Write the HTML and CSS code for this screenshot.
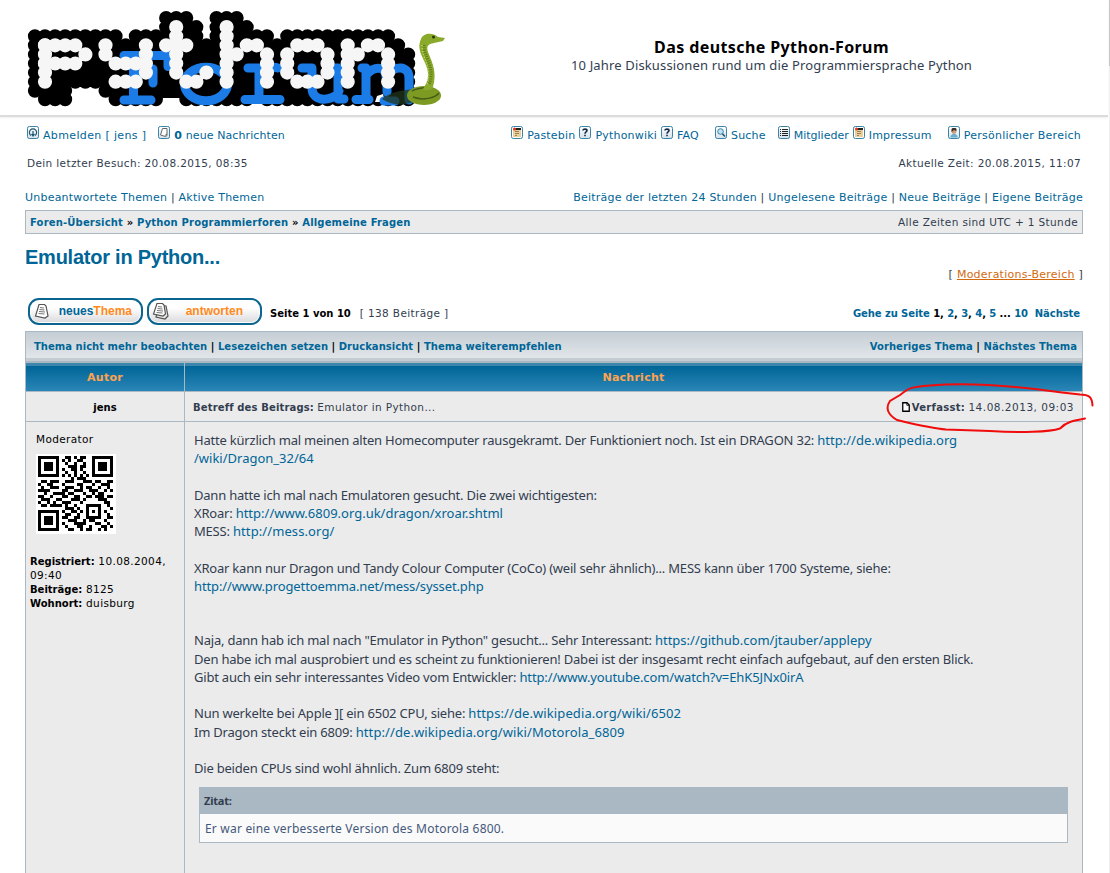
FILE: index.html
```
<!DOCTYPE html>
<html lang="de">
<head>
<meta charset="utf-8">
<title>Das deutsche Python-Forum</title>
<link rel="stylesheet" href="styles.css">
</head>
<body>
<svg class="defs" width="0" height="0">
  <defs>
    <linearGradient id="tile" x1="0" y1="0" x2="0" y2="1"><stop offset="0" stop-color="#fff"/><stop offset="1" stop-color="#d5e2ea"/></linearGradient>
    <symbol id="i-note" viewBox="0 0 12 13"><rect x=".5" y=".5" width="11" height="12" rx="1.8" fill="#fff" stroke="#3a83a7"/><path d="M2 2h8v9H2z" fill="#e8cf9b"/><path d="M4 5.500h4M4 7.500h4M4 9.500h2" stroke="#9b8055"/><path d="M4 2h6v2H4z" fill="#222"/><circle cx="3.500" cy="3" r="1.500" fill="#e33b1c"/></symbol>
    <symbol id="i-help" viewBox="0 0 12 13"><rect x=".5" y=".5" width="11" height="12" rx="1.800" fill="url(#tile)" stroke="#3a83a7"/><path d="M4 4.500C4 2.600 8 2.600 8 4.600C8 6 6 6 6 7.800M6 8.800v1.500" fill="none" stroke="#16294a" stroke-width="1.600"/></symbol>
  </defs>
</svg>
<div class="edge"></div>
<header class="header">
  <svg class="logo" width="430" height="110" viewBox="20 5 430 110">
    <g fill="none" stroke="#000" stroke-width="14" stroke-linecap="round" stroke-dasharray="0 10.090">
      <path d="M166.100 18h20.300M216.500 18h20.300M166.100 27.100h30.400M216.500 27.100h30.400"/>
      <path d="M34.900 36.200h80.900M135.800 36.200h60.700M216.500 36.200h50.600M287.200 36.200h101"/>
      <path d="M34.900 45.300h363.500M34.900 54.400h373.600M34.900 63.500h373.600M34.900 72.600h373.600M34.900 81.700h373.600"/>
      <path d="M34.900 90.800h30.400M105.500 90.800h302.800"/>
      <path d="M45 99.300h20.300M115.600 99.300h40.500M186.300 99.300h60.600M267 99.300h20.300M297.300 99.300h111"/>
    </g>
    <path d="M40 45h360v42H40zM110 86h292v12H110z" fill="#000"/>
    <path d="M256 94l4 4v6h-4zM375 102l2-6 6-2 2 8z" fill="#fff"/>
    <g fill="none" stroke="#1b7ce8" stroke-width="9" stroke-linecap="round" stroke-linejoin="round">
      <path d="M124 55.500h44v11M133.500 56v44M124 100h27M134 73h19M153 69v14"/>
      <ellipse cx="206" cy="84" rx="21.500" ry="16.800"/>
      <path d="M248 68h11v31M245 99.500h35M260 75c5-7 12-9 18-7M302 68h10v20c0 15 22 14 27 3M329 68h9v31h6M362 68h4v31M356 99.500h13M367 74c9-9 19-7 19 3M387 76c7-11 22-11 22 2v22M387 74v18M384 101h11"/>
    </g>
    <g fill="none" stroke="#f6f6f6" stroke-width="14.200" stroke-linecap="round">
      <path stroke-dasharray="0 10.090" d="M45 45.300h30.400M45 63.500h30.400M85.400 54.400h.1M115.600 63.500h20.300M115.600 81.700h20.300M166.100 45.300h20.300M186.300 81.700h10.200M206.400 72.600h.1M236.700 54.400h.1M246.800 45.300h10.200M297.300 45.300h20.300M297.300 81.700h20.300M357.800 54.400h.1M367.900 45.300h10.200"/>
      <path stroke-dasharray="0 9.090" d="M45 45.300v36.500M105.500 45.300v9.200M145.900 45.300v27.400M176.200 27.100v45.600M226.600 27.100v54.700M267 54.400v27.400M287.200 54.400v18.300M327.500 54.400v18.300M347.700 45.300v36.500M388.100 54.400v27.400"/>
    </g>
    <path d="M382 99c8-7 20-9 33-10v12c-10 5-22 5-33-2z" fill="#22351c" opacity=".75"/>
    <ellipse cx="424" cy="95.500" rx="17" ry="9.500" fill="#7d9b22"/>
    <path d="M413 97c10 4 22 1 26-4M412 91c7-4 14-3 20-4" stroke="#465d17" stroke-width="1.500" fill="none"/>
    <path d="M433 87c-2 4-8 4-10 2c6-9 6-14 4-21c-3-10-11-18-6-29c3-7 12-6 17-2l7 1-2 3-9 2c-6 1-8 3-6 9c5 12 9 21 5 35z" fill="#89aa2b"/>
    <path d="M424 45c0 13 12 22 5 40" stroke="#5b771c" stroke-width="3" stroke-dasharray="1 1.300" fill="none"/>
    <path d="M422 45c0 14 10 22 5 40" stroke="#c3d45a" stroke-width="1.500" stroke-dasharray="1 2" fill="none"/>
    <circle cx="433.500" cy="37" r="1.500" fill="#28360d"/>
  </svg>
  <div class="site">
    <div class="site-name"><span>Das deutsche Python-Forum</span></div>
    <div class="site-desc"><span>10 Jahre Diskussionen rund um die Programmiersprache Python</span></div>
  </div>
</header>
<main class="page">
  <nav class="menu">
    <div class="group">
      <svg class="ic" viewBox="0 0 12 13"><rect x=".5" y=".5" width="11" height="12" rx="1.800" fill="url(#tile)" stroke="#3a83a7"/><path d="M4 9.500a3.600 3.600 0 1 1 4 0M6 5v5M4.500 8L6 10l1.500-2" fill="none" stroke="#1c5570" stroke-width="1.200"/></svg><a class="m1">Abmelden [ jens ]</a>
      <svg class="ic gap-a" viewBox="0 0 12 13"><rect x=".5" y=".5" width="11" height="12" rx="1.800" fill="url(#tile)" stroke="#3a83a7"/><path d="M4.500 2.500H9V9.500L7.500 10.500L2.500 9L4.500 2.500M7 9.500L9 8" fill="#fff" stroke="#666"/></svg><a class="m2"><b>0</b> neue Nachrichten</a>
    </div>
    <div class="group right">
      <svg class="ic"><use href="#i-note"/></svg><a class="m3">Pastebin</a>
      <svg class="ic"><use href="#i-help"/></svg><a class="m4">Pythonwiki</a>
      <svg class="ic"><use href="#i-help"/></svg><a class="m5">FAQ</a>
      <svg class="ic" viewBox="0 0 12 13"><rect x=".5" y=".5" width="11" height="12" rx="1.800" fill="url(#tile)" stroke="#3a83a7"/><circle cx="5.500" cy="5.500" r="2.800" fill="#bfe2f4" stroke="#3a83a7"/><path d="M7.500 7.800L10 10.500" stroke="#265d7a" stroke-width="1.700"/></svg><a class="m6">Suche</a>
      <svg class="ic" viewBox="0 0 12 13"><rect x=".5" y=".5" width="11" height="12" rx="1.800" fill="url(#tile)" stroke="#3a83a7"/><path d="M2 3.500h1M4 3.500h6M2 5.500h1M4 5.500h6M2 7.500h1M4 7.500h6M2 9.500h1M4 9.500h6" stroke="#222"/></svg><a class="m7">Mitglieder</a>
      <svg class="ic"><use href="#i-note"/></svg><a class="m8">Impressum</a>
      <svg class="ic" viewBox="0 0 12 13"><rect x=".5" y=".5" width="11" height="12" rx="1.800" fill="url(#tile)" stroke="#3a83a7"/><path d="M2.500 11.500V10l2-2h3l2 2v1.500z" fill="#69afd0"/><circle cx="6" cy="5.500" r="2.400" fill="#d29a76"/><path d="M3.500 6V3l1-1h3l1 1v2L6 4z" fill="#3c2c25"/></svg><a class="m9">Persönlicher Bereich</a>
    </div>
  </nav>
  <div class="row visits small"><span>Dein letzter Besuch: 20.08.2015, 08:35</span><span>Aktuelle Zeit: 20.08.2015, 11:07</span></div>
  <div class="row filters"><span><a>Unbeantwortete Themen</a> | <a>Aktive Themen</a></span><span><a>Beiträge der letzten 24 Stunden</a> | <a>Ungelesene Beiträge</a> | <a>Neue Beiträge</a> | <a>Eigene Beiträge</a></span></div>
  <div class="row crumbs"><b><a>Foren-Übersicht</a> » <a>Python Programmierforen</a> » <a>Allgemeine Fragen</a></b><span class="small zone">Alle Zeiten sind UTC + 1 Stunde</span></div>
  <h1 class="title"><span>Emulator in Python...</span></h1>
  <div class="mod">[ <a>Moderations-Bereich</a> ]</div>
  <div class="actions">
    <a class="btn"><svg width="16" height="17" viewBox="0 0 16 17"><path d="M5 1.500L10.500 1.500L12 3L14 13l-3 2L1.500 13z" fill="#fff" stroke="#555" stroke-width="1.200"/><path d="M6 4.500l4 .5M5.500 6.500l5 .5M5 8.500l6 .5M4.500 10.500l6 .5" stroke="#777"/></svg><span><em>neues</em>Thema</span></a>
    <a class="btn reply"><svg width="18" height="19" viewBox="0 0 18 19"><path d="M7 3l7 1 2 10-3 3-9-2z" fill="#e5e5e0" stroke="#555" stroke-width="1.200"/><path d="M5 1.500L10.500 1.500L12 3L13.500 12l-2.500 2L1.500 12z" fill="#fff" stroke="#555" stroke-width="1.200"/><path d="M6 4.500l4 .5M5.500 6.500l5 .5M5 8.500l6 .5M4.500 10.500l6 .5" stroke="#777"/></svg><span>antworten</span></a>
    <b class="seite">Seite 1 von 10</b><span class="count small">[ 138 Beiträge ]</span>
    <b class="goto"><a>Gehe zu Seite</a> 1, <a>2</a>, <a>3</a>, <a>4</a>, <a>5</a> ... <a>10</a>&nbsp; <a>Nächste</a></b>
  </div>
  <section class="topic">
    <div class="toolbar"><b><a>Thema nicht mehr beobachten</a> | <a>Lesezeichen setzen</a> | <a>Druckansicht</a> | <a>Thema weiterempfehlen</a></b><b><a>Vorheriges Thema</a> | <a>Nächstes Thema</a></b></div>
    <div class="head"><b>Autor</b><b><span>Nachricht</span></b></div>
    <div class="meta"><b class="author">jens</b>
      <div class="subject"><span><b>Betreff des Beitrags:</b> <span class="small">Emulator in Python...</span></span><span class="date"><svg width="8" height="10" viewBox="0 0 8 10"><path d="M.75.750H5L7.250 3V9.250H.75z" fill="#fff" stroke="#000" stroke-width="1.300"/><path d="M4.800 1v2.300H7" fill="none" stroke="#000" stroke-width=".8"/></svg><b>Verfasst:</b> <span class="small">14.08.2013, 09:03</span></span></div>
    </div>
    <div class="post">
      <aside class="profile small">
        <div class="rank">Moderator</div>
        <svg class="avatar" width="80" height="80" viewBox="-.667 -.667 26.667 26.667" shape-rendering="crispEdges"><path d="M-1-1h28v28H-1z" fill="#fff"/>
          <path fill="none" stroke="#000" d="M0 .5h7M9 .5h2M12 .5h1M14 .5h2M18 .5h7M0 1.500h1M6 1.500h1M8 1.500h1M10 1.500h1M13 1.500h2M18 1.500h1M24 1.500h1M0 2.500h1M2 2.500h3M6 2.500h1M9 2.500h1M12 2.500h1M15 2.500h1M18 2.500h1M20 2.500h3M24 2.500h1M0 3.500h1M2 3.500h3M6 3.500h1M10 3.500h3M14 3.500h2M18 3.500h1M20 3.500h3M24 3.500h1M0 4.500h1M2 4.500h3M6 4.500h1M8 4.500h1M11 4.500h2M14 4.500h1M18 4.500h1M20 4.500h3M24 4.500h1M0 5.500h1M6 5.500h1M9 5.500h1M12 5.500h1M15 5.500h1M18 5.500h1M24 5.500h1M0 6.500h7M8 6.500h1M10 6.500h1M12 6.500h1M14 6.500h1M16 6.500h1M18 6.500h7M11 7.500h1M13 7.500h3M1 8.500h2M4 8.500h3M9 8.500h3M15 8.500h3M19 8.500h2M23 8.500h2M0 9.500h1M3 9.500h2M8 9.500h1M13 9.500h2M18 9.500h1M21 9.500h3M1 10.500h1M4 10.500h3M9 10.500h3M14 10.500h1M16 10.500h2M20 10.500h1M23 10.500h1M0 11.500h4M8 11.500h2M12 11.500h3M17 11.500h3M22 11.500h1M24 11.500h1M2 12.500h1M5 12.500h4M10 12.500h2M15 12.500h1M18 12.500h1M20 12.500h2M0 13.500h2M4 13.500h1M8 13.500h2M12 13.500h2M16 13.500h2M19 13.500h3M23 13.500h2M1 14.500h3M6 14.500h2M11 14.500h3M15 14.500h1M20 14.500h3M0 15.500h1M3 15.500h1M5 15.500h1M8 15.500h3M14 15.500h1M22 15.500h2M1 16.500h2M4 16.500h4M9 16.500h1M12 16.500h1M16 16.500h5M23 16.500h1M9 17.500h3M13 17.500h1M16 17.500h1M20 17.500h1M24 17.500h1M0 18.500h7M8 18.500h1M11 18.500h2M14 18.500h1M16 18.500h1M18 18.500h1M20 18.500h1M22 18.500h1M0 19.500h1M6 19.500h1M9 19.500h2M13 19.500h1M16 19.500h1M20 19.500h1M23 19.500h1M0 20.500h1M2 20.500h3M6 20.500h1M8 20.500h2M12 20.500h2M16 20.500h5M23 20.500h2M0 21.500h1M2 21.500h3M6 21.500h1M10 21.500h3M15 21.500h1M17 21.500h2M22 21.500h1M0 22.500h1M2 22.500h3M6 22.500h1M8 22.500h1M12 22.500h4M19 22.500h2M23 22.500h1M0 23.500h1M6 23.500h1M9 23.500h1M13 23.500h2M17 23.500h1M21 23.500h2M24 23.500h1M0 24.500h7M10 24.500h2M14 24.500h1M16 24.500h2M20 24.500h1M22 24.500h1"/></svg>
        <div class="facts"><b>Registriert:</b> 10.08.2004,<br>09:40<br><b>Beiträge:</b> 8125<br><b>Wohnort:</b> duisburg</div>
      </aside>
      <article class="body">
        <p>Hatte kürzlich mal meinen alten Homecomputer rausgekramt. Der Funktioniert noch. Ist ein DRAGON 32: <a>http://de.wikipedia.org</a></p>
        <p><a>/wiki/Dragon_32/64</a></p><p></p>
        <p>Dann hatte ich mal nach Emulatoren gesucht. Die zwei wichtigesten:</p>
        <p>XRoar: <a>http://www.6809.org.uk/dragon/xroar.shtml</a></p>
        <p>MESS: <a class="wide">http://mess.org/</a></p><p></p>
        <p>XRoar kann nur Dragon und Tandy Colour Computer (CoCo) (weil sehr ähnlich)... MESS kann über 1700 Systeme, siehe:</p>
        <p><a class="tight">http://www.progettoemma.net/mess/sysset.php</a></p><p></p><p></p>
        <p>Naja, dann hab ich mal nach "Emulator in Python" gesucht... Sehr Interessant: <a>https://github.com/jtauber/applepy</a></p>
        <p>Den habe ich mal ausprobiert und es scheint zu funktionieren! Dabei ist der insgesamt recht einfach aufgebaut, auf den ersten Blick.</p>
        <p>Gibt auch ein sehr interessantes Video vom Entwickler: <a class="tight">http://www.youtube.com/watch?v=EhK5JNx0irA</a></p><p></p>
        <p>Nun werkelte bei Apple ][ ein 6502 CPU, siehe: <a class="wide">https://de.wikipedia.org/wiki/6502</a></p>
        <p>Im Dragon steckt ein 6809: <a class="wide">http://de.wikipedia.org/wiki/Motorola_6809</a></p><p></p>
        <p>Die beiden CPUs sind wohl ähnlich. Zum 6809 steht:</p>
        <div class="quote"><b>Zitat:</b><div>Er war eine verbesserte Version des Motorola 6800.</div></div>
      </article>
    </div>
  </section>
</main>
<svg class="marker" width="210" height="56" viewBox="885 380 210 56"><path d="M1092.500 405.500C1092 397 1089 394.500 1080 394.500L1062 392.500L1035 389C1000 385 960 383 930 385.500C910 387 909 388 900 395L890 401C885 408 888 415 897 420C910 423 930 428 946 429.500L990 431C1020 433 1050 432 1060 428.500C1066 422 1074 420.500 1085 418.500" fill="none" stroke="#f00c0c" stroke-width="2" stroke-linecap="round"/></svg>
</body>
</html>
```
FILE: styles.css
```
* { box-sizing: border-box; }
html, body { height: 873px; overflow: hidden; }
body { margin: 0; background: #fff; color: #323d4f; font: 11px/14px "DejaVu Sans", Verdana, sans-serif; white-space: nowrap; position: relative; }
a { color: #006597; }
b { font-weight: bold; }
.small { font-size: 10.5px; letter-spacing: .37px; }
.small b { font-size: 10px; letter-spacing: 0; line-height: 1; }
.defs { position: absolute; }
.edge { position: absolute; right: 0; top: 0; width: 1px; height: 873px; background: linear-gradient(#c9c9c9 66px, #f0f0f0 66px); }
.header { height: 117px; width: 1108px; display: flex; padding: 5px 0 0 20px; border-bottom: 2px solid #dcdcdc; box-shadow: 0 1px 2px #eee; }
.logo { flex: none; }
.site { width: 643px; text-align: center; padding-top: 32px; }
.site-name { font: bold 16px/20px "Noto Sans", sans-serif; color: #000; letter-spacing: .4px; }
.site-desc { font: 13px/17px "Noto Sans", sans-serif; letter-spacing: .15px; }
.page { margin: 0 27px 0 25px; }
.menu { display: flex; justify-content: space-between; height: 36px; padding: 9px 2px 0 2px; letter-spacing: .2px; }
.group { display: flex; align-items: flex-start; }
.ic { width: 12px; height: 13px; margin-right: 4px; flex: none; }
.menu a { padding-top: 3px; margin-right: 4px; }
.gap-a { margin-left: 8px; }
.menu .m1 { letter-spacing: .35px; }
.menu .m2 { letter-spacing: .1px; }
.menu .m5, .menu .m8 { margin-right: 16px; }
.menu .m6 { margin-right: 12px; }
.menu .m7 { letter-spacing: 0; }
.menu .m9 { margin-right: 0; letter-spacing: .25px; }
.row { display: flex; justify-content: space-between; }
.visits { padding: 3px 2px 0; height: 37px; }
.filters { height: 20px; padding-top: 1px; letter-spacing: .22px; }
.crumbs { border: 1px solid #a9b8c2; background: #ebebeb; height: 24px; padding: 5px 4px; font-size: 10px; }
.crumbs b { color: #000; letter-spacing: .17px; }
.zone { line-height: 12px; }
.title { margin: 0; height: 33px; padding-top: 11px; font: bold 20px/24px "Liberation Sans", Arial, sans-serif; color: #006597; letter-spacing: -.24px; }
.mod { text-align: right; height: 31px; padding-top: 1px; letter-spacing: .25px; }
.mod a { color: #d36a10; text-decoration: underline; }
.actions { display: flex; height: 33px; padding-left: 3px; padding-right: 3px; font-size: 10px; color: #323d4f; }
.btn { width: 115px; height: 27px; margin-right: 4px; border: 2px solid #0a6590; border-radius: 11px; background: linear-gradient(#fff 35%, #d9d9dc); display: flex; padding: 3px 9px 0 4px; justify-content: space-between; font: bold 12px/16px "Liberation Sans", Arial, sans-serif; color: #ff8a1c; box-shadow: inset 0 0 0 1px #fff; }
.btn em { font-style: normal; color: #006597; }
.reply { padding: 2px 17px 0 3px; margin-right: 8px; }
.reply span { padding-top: 1px; }
.seite { padding-top: 9px; color: #000; }
.count { padding: 8px 0 0 9px; }
.goto { margin-left: auto; padding-top: 9px; color: #000; letter-spacing: -.07px; }
.topic { border: 1px solid #a9b8c2; border-bottom: 0; height: 542px; background: #ebebeb; }
.toolbar { height: 29px; background: linear-gradient(#c5ced5, #e0e5e8 88%, #c4ccd2 88%); display: flex; justify-content: space-between; padding: 8px 5px 0 8px; font-size: 10px; color: #000; letter-spacing: .03px; }
.head { display: grid; grid-template-columns: 158px 1fr; height: 31px; border-top: 2px solid #a9b8c2; border-bottom: 1px solid #a9b8c2; background: linear-gradient(#3e87ac 3px, #006597 3px, #2a86b6); color: #ffa34f; text-align: center; line-height: 29px; letter-spacing: .25px; }
.head b + b, .subject, .body { border-left: 1px solid #a9b8c2; }
.meta { display: grid; grid-template-columns: 158px 1fr; height: 30px; border-bottom: 1px solid #a9b8c2; font-size: 10px; line-height: 31px; }
.author { text-align: center; color: #000; }
.subject { display: flex; justify-content: space-between; padding: 0 8px; letter-spacing: .15px; }
.date svg { margin: 0 2px -1px 0; }
.date b { letter-spacing: .3px; }
.date .small { letter-spacing: .5px; }
.post { display: grid; grid-template-columns: 158px 1fr; height: 451px; }
.profile { padding: 10px 4px; color: #000; }
.rank { padding-left: 6px; height: 22px; }
.avatar { display: block; margin-left: 6px; }
.facts { margin-top: 20px; }
.body { padding: 9px 14px 0 9px; font: 13px/18.200px "Noto Sans", sans-serif; letter-spacing: -.21px; }
.body a { letter-spacing: 0; }
.body .tight { letter-spacing: -.12px; }
.body .wide { letter-spacing: .1px; }
.body p { margin: 0; height: 18.220px; }
.quote { margin: 10px 0 0 5px; border: 1px solid #a9b8c2; height: 56px; font-size: 12px; color: #44587a; letter-spacing: .2px; }
.quote b { display: block; background: #a9b8c2; height: 26px; padding: 4px; font-size: 11px; color: #323d4f; letter-spacing: -.2px; }
.quote div { background: #fafafa; height: 28px; padding: 6px 5px; }
.marker { position: absolute; left: 885px; top: 380px; }
```
